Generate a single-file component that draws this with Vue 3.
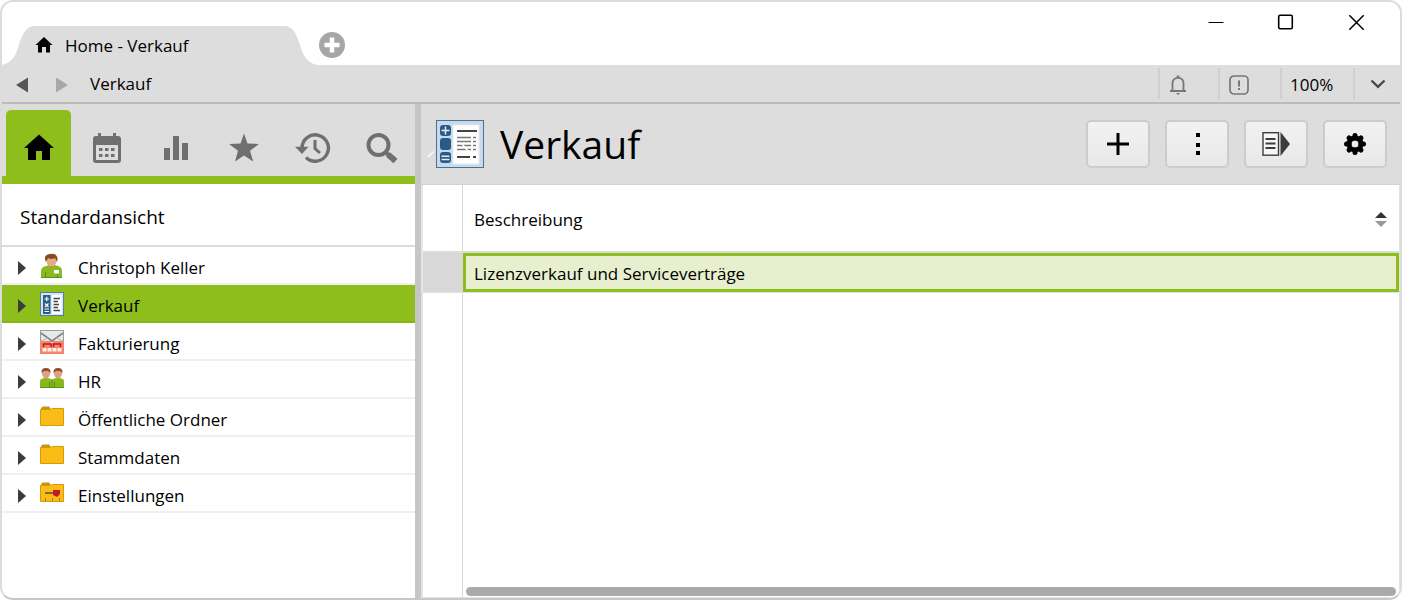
<script setup>
import { ref } from 'vue'

const sections = [
  { id: 'home', label: 'Home' },
  { id: 'calendar', label: 'Kalender' },
  { id: 'chart', label: 'Auswertungen' },
  { id: 'star', label: 'Favoriten' },
  { id: 'history', label: 'Verlauf' },
  { id: 'search', label: 'Suche' }
]
const section = ref('home')

const tree = [
  { label: 'Christoph Keller', icon: 'person' },
  { label: 'Verkauf', icon: 'sales' },
  { label: 'Fakturierung', icon: 'invoice' },
  { label: 'HR', icon: 'people' },
  { label: 'Öffentliche Ordner', icon: 'folder' },
  { label: 'Stammdaten', icon: 'folder' },
  { label: 'Einstellungen', icon: 'settings' }
]
const selected = ref('Verkauf')

const rows = ['Lizenzverkauf und Serviceverträge']
</script>

<template>
  <div class="window">
    <header class="titlebar">
      <div class="tabs">
        <svg class="cap" width="33" height="39" viewBox="0 0 33 39" aria-hidden="true"><path d="M0 39C9 37 13 31 16 22C20 10 23 0 33 0V39Z" fill="#ddd" /></svg>
        <button class="tab" type="button">
          <svg width="18" height="18" viewBox="0 0 18 18" aria-hidden="true"><path d="M9 0L0.5 8H3V15.500H7V10H11V15.500H15V8H17.500Z" fill="#000" /></svg>
          <span>Home - Verkauf</span>
        </button>
        <svg class="cap" width="33" height="39" viewBox="0 0 33 39" aria-hidden="true"><path d="M33 39C24 37 20 31 17 22C13 10 10 0 0 0V39Z" fill="#ddd" /></svg>
        <button class="add" type="button" aria-label="Neuer Tab">
          <svg width="26" height="26" viewBox="0 0 26 26"><circle cx="13" cy="13" r="13" fill="#a6a6a6" /><path d="M13 5.500V20.500M5.500 13H20.500" stroke="#fff" stroke-width="4.500" /></svg>
        </button>
      </div>
      <div class="controls">
        <button type="button" aria-label="Minimieren"><svg width="16" height="16" viewBox="0 0 16 16"><path d="M0.500 8.500H15.500" stroke="#000" stroke-width="1.200" /></svg></button>
        <button type="button" aria-label="Maximieren"><svg width="16" height="16" viewBox="0 0 16 16"><rect x="0.700" y="1.200" width="13.600" height="13.600" rx="1.500" fill="none" stroke="#000" stroke-width="1.600" /></svg></button>
        <button type="button" aria-label="Schliessen"><svg width="16" height="16" viewBox="0 0 16 16"><path d="M1.300 1.300L15.700 15.700M15.700 1.300L1.300 15.700" stroke="#000" stroke-width="1.500" /></svg></button>
      </div>
    </header>

    <nav class="toolbar" aria-label="Navigation">
      <button class="arrow" type="button" aria-label="Zurück"><svg width="12" height="16" viewBox="0 0 12 16"><path d="M12 0.500V15.500L0 8Z" fill="#555" /></svg></button>
      <button class="arrow" type="button" aria-label="Vorwärts"><svg width="12" height="16" viewBox="0 0 12 16"><path d="M0 0.500V15.500L12 8Z" fill="#a8a8a8" /></svg></button>
      <a class="crumb" href="#">Verkauf</a>
      <div class="status">
        <button class="cell bell" type="button" aria-label="Benachrichtigungen">
          <svg width="18" height="20" viewBox="0 0 18 20"><path d="M1 16H17M3.500 16V8.500C3.500 5 5.500 2.800 9 2.800S14.500 5 14.500 8.500V16" fill="none" stroke="#777" stroke-width="1.800" /><circle cx="9" cy="1.800" r="1.500" fill="#777" /><path d="M7 18H11L9 20Z" fill="#777" /></svg>
        </button>
        <button class="cell alert" type="button" aria-label="Hinweise">
          <svg width="20" height="20" viewBox="0 0 20 20"><rect x="1" y="1" width="18" height="18" rx="4" fill="none" stroke="#777" stroke-width="1.700" /><path d="M10 5.500V11.500M10 13V15" stroke="#777" stroke-width="2" /></svg>
        </button>
        <button class="cell zoom" type="button">100%</button>
        <button class="cell more" type="button" aria-label="Mehr">
          <svg width="16" height="10" viewBox="0 0 16 10"><path d="M1.500 0.500L8 6.800L14.500 0.500" fill="none" stroke="#484848" stroke-width="2.300" /></svg>
        </button>
      </div>
    </nav>

    <div class="body">
      <aside class="sidebar">
        <div class="sections">
          <button v-for="s in sections" :key="s.id" type="button" class="section" :class="{ active: s.id === section }" :aria-label="s.label" @click="section = s.id">
            <svg width="32" height="32" viewBox="0 0 32 32">
              <path v-if="s.id === 'home'" d="M16 2.500L1 16H5V28H13V19H19V28H27V16H31Z" fill="#000" />
              <g v-else-if="s.id === 'calendar'" fill="#6f6f6f">
                <path fill-rule="evenodd" d="M5 4H7V1H10V4H22V1H25V4H27Q30 4 30 7V28Q30 31 27 31H5Q2 31 2 28V7Q2 4 5 4ZM5 13V28H27V13Z" />
                <path d="M8 16h3.500v3h-3.500zM14 16h3.500v3h-3.500zM20 16h3.500v3h-3.500zM8 22h3.500v3h-3.500zM14 22h3.500v3h-3.500zM20 22h3.500v3h-3.500z" />
              </g>
              <path v-else-if="s.id === 'chart'" d="M4 16H10V28H4ZM13 4H19V28H13ZM22 11H28V28H22Z" fill="#6f6f6f" />
              <path v-else-if="s.id === 'star'" d="M16 1.500L19.500 11.500L31 12L22 18.700L25.200 29.500L16 23.500L7 29.500L10 18.700L1 12L12.500 11.500Z" fill="#6f6f6f" />
              <g v-else-if="s.id === 'history'">
                <path d="M6 16A13.200 13.200 0 1 1 10 25.500" fill="none" stroke="#6f6f6f" stroke-width="3.400" />
                <path d="M-1 14.700H12.500L6 22Z" fill="#6f6f6f" />
                <path d="M19 8V16.500L24 21" fill="none" stroke="#6f6f6f" stroke-width="3" />
              </g>
              <g v-else fill="none" stroke="#6f6f6f">
                <circle cx="13.500" cy="13" r="10" stroke-width="4" />
                <path d="M20.500 20L23.500 23" stroke-width="4" />
                <path d="M23 22.500L30.500 29" stroke-width="6" />
              </g>
            </svg>
          </button>
        </div>
        <h2>Standardansicht</h2>
        <ul class="tree">
          <li v-for="item in tree" :key="item.label">
            <button type="button" class="node" :class="{ selected: item.label === selected }" @click="selected = item.label">
              <svg class="expander" width="8" height="14" viewBox="0 0 8 14" aria-hidden="true"><path d="M0 0L8 7L0 14Z" fill="#3c3c3c" /></svg>
              <svg class="icon" width="24" height="24" viewBox="0 0 24 24" aria-hidden="true">
                <g v-if="item.icon === 'person'">
                  <path d="M1 24V17Q1 13 6 12L9 11H15L18 12Q22 13 22 17V24Z" fill="#8aba1f" />
                  <path d="M1 23.500H22M5.500 18V24M17.500 20V24" stroke="#5c9014" stroke-width="1" />
                  <path d="M8 10L11.500 14L15 10Z" fill="#bd7858" />
                  <ellipse cx="11.500" cy="7" rx="5" ry="5.500" fill="#e2ac8d" />
                  <path d="M6 8C3 2 7 0 11 0C15 -1 19 2 17 8L15 4Q11 6 8 4Z" fill="#8a4a20" />
                  <rect x="14" y="16" width="5" height="3.500" fill="#fff" />
                </g>
                <g v-else-if="item.icon === 'sales'">
                  <rect x="0.500" y="0.500" width="23" height="23" fill="#d7e5f0" stroke="#557f9e" />
                  <rect x="3" y="3" width="7.500" height="19" fill="#285f8d" />
                  <rect x="12" y="3" width="9.500" height="19" fill="#fff" />
                  <path d="M4.500 7H9M6.750 4.800V9.200M5 11.500L8.500 15M8.500 11.500L5 15M4.500 17H9M4.500 19.500H9" stroke="#fff" stroke-width="1.200" />
                  <path d="M13.500 6.500H20M13.500 9.500H18M13.500 12.500H19M13.500 15.500H18M13.500 18.500H20" stroke="#444" stroke-width="1.400" />
                </g>
                <g v-else-if="item.icon === 'invoice'">
                  <rect x="0.500" y="0.500" width="23" height="11" fill="#e6eae9" stroke="#969e9e" />
                  <path d="M1 3L12 11L23 3" fill="none" stroke="#808888" stroke-width="1.800" />
                  <path d="M1 11L8 8M23 11L16 8" fill="none" stroke="#b4baba" />
                  <path d="M0 11H9L12 13L15 11H24V24H0Z" fill="#f78464" />
                  <path d="M3.500 17V14H11V17M13.500 17V14H20.500V17" fill="none" stroke="#c8102e" stroke-width="1.500" />
                  <path d="M2.500 18h4v3.500h-4zM7.500 18h4v3.500h-4zM12.500 18h4v3.500h-4zM17.500 18h4v3.500h-4z" fill="#fff3ec" />
                </g>
                <g v-else-if="item.icon === 'people'">
                  <path d="M0 20V13Q0 10 6 10Q12 10 12 13Q12 10 18 10Q24 10 24 13V20Z" fill="#88b91b" />
                  <path d="M0.500 19.500H23.500M12 11V20M9.500 14V20M14.500 14V20" stroke="#5a9018" />
                  <ellipse cx="6" cy="5.500" rx="4" ry="4.800" fill="#dfa080" /><ellipse cx="18" cy="5.500" rx="4" ry="4.800" fill="#dfa080" />
                  <path d="M1.500 5Q1 0 6 0Q11 0 10.500 5L8 3H4ZM13.500 5Q13 0 18 0Q23 0 22.500 5L20 3H16Z" fill="#91502b" />
                </g>
                <g v-else>
                  <path d="M1 5V2L3 0.500H9L11 3V5Z" fill="#c8930e" />
                  <path d="M0.500 3.500H11L12 2.500H23.500V19.500H0.500Z" fill="#fcbc16" stroke="#d79a0e" />
                  <g v-if="item.icon === 'settings'">
                    <path d="M5 11H15" stroke="#806830" stroke-width="2" />
                    <path d="M13 8H20V12L17 15L13 13Z" fill="#c51623" />
                    <path d="M5.500 16V19M12.500 16V19M19.500 16V19" stroke="#a77717" />
                  </g>
                </g>
              </svg>
              <span>{{ item.label }}</span>
            </button>
          </li>
        </ul>
      </aside>

      <main class="content">
        <div class="head">
          <svg class="emblem" width="56" height="48" viewBox="0 0 56 48" aria-hidden="true">
            <path d="M0 37L5.500 31.500" stroke="#fff" stroke-width="1.300" />
            <rect x="8.500" y="0.500" width="47" height="47" fill="#c9d9e8" stroke="#487198" />
            <rect x="25" y="5" width="26" height="39" fill="#fff" stroke="#e4edf5" />
            <g fill="#285b88"><rect x="12" y="5" width="11" height="11" rx="3" /><rect x="12" y="18" width="11" height="12" rx="3" /><rect x="12" y="32" width="11" height="11" rx="3" /></g>
            <path d="M13.500 10.500H21.500M17.500 6.500V14.500M13.500 36.300H21.500M13.500 39.500H21.500" stroke="#e4edf5" stroke-width="1.500" />
            <path d="M29 11H49M29 37H42M45 37H48" stroke="#444" stroke-width="2" />
            <path d="M29 17.500H43M29 21.500H43M29 25.500H43M29 29.500H43M45 17.500H48M45 21.500H48M45 25.500H48M45 29.500H48" stroke="#777" stroke-width="1.500" />
            <path d="M34 24L40 31" stroke="#fff" stroke-width="1.500" />
          </svg>
          <h1>Verkauf</h1>
          <div class="actions">
            <button type="button" aria-label="Hinzufügen"><svg width="28" height="28" viewBox="0 0 28 28"><path d="M14 3V25M3 14H25" stroke="#000" stroke-width="3" /></svg></button>
            <button type="button" aria-label="Menü"><svg width="28" height="28" viewBox="0 0 28 28"><path d="M13 3h4v4h-4zM13 13h4v4h-4zM13 21h4v4h-4z" fill="#000" /></svg></button>
            <button type="button" aria-label="Ausgabe"><svg width="28" height="28" viewBox="0 0 28 28"><rect x="1" y="2.700" width="15.500" height="22.500" fill="#f6f6f6" stroke="#3c3c3c" stroke-width="1.400" /><path d="M3.500 9H13.500M3.500 13.500H13.500M3.500 18H13.500" stroke="#3c3c3c" stroke-width="2" /><path d="M18.500 2V26L28 14Z" fill="#3c3c3c" /></svg></button>
            <button type="button" aria-label="Einstellungen"><svg width="28" height="28" viewBox="0 0 28 28"><g stroke="#000" stroke-width="5" stroke-linecap="round"><path d="M14 5.500V8M14 20V22.500M5.500 14H8M20 14H22.500M8 8L9 9M19 19L20 20M20 8L19 9M8 20L9 19" /></g><circle cx="14" cy="14" r="6" fill="none" stroke="#000" stroke-width="5" /></svg></button>
          </div>
        </div>
        <table>
          <thead>
            <tr>
              <th class="gutter" scope="col" aria-label="Zeile"></th>
              <th scope="col"><button type="button" class="sort"><span>Beschreibung</span><svg width="12" height="16" viewBox="0 0 12 16" aria-hidden="true"><path d="M6 0L12 6H0Z" fill="#333" /><path d="M0 9H12L6 15Z" fill="#999" /></svg></button></th>
            </tr>
          </thead>
          <tbody>
            <tr v-for="row in rows" :key="row">
              <td class="gutter mark"></td>
              <td class="value">{{ row }}</td>
            </tr>
          </tbody>
        </table>
        <div class="rest">
          <div class="rest-gutter"></div>
          <div class="track"><div class="thumb"></div></div>
        </div>
      </main>
    </div>
  </div>
</template>

<style>
body { margin: 0; background: #fff; }
</style>

<style scoped>
* { box-sizing: border-box; }
.window {
  min-height: 100vh;
  display: flex;
  flex-direction: column;
  overflow: hidden;
  border: 2px solid #dcdcdc;
  border-bottom-color: #c8c8c8;
  border-radius: 13px;
  background: #fff;
  color: #000;
  font: 17px/24px "Open Sans", "Noto Sans", sans-serif;
}
button { margin: 0; padding: 0; border: 0; background: none; color: inherit; font: inherit; text-align: left; }
svg { display: block; flex: none; overflow: visible; }

.titlebar { height: 63px; display: flex; justify-content: space-between; }
.tabs { display: flex; align-items: flex-end; }
.tab { width: 249px; height: 39px; display: flex; align-items: center; gap: 12px; background: #ddd; }
.add { margin: 0 0 7px 2px; }
.controls { display: flex; gap: 54px; padding: 12px 36px 0 0; align-items: flex-start; }

.toolbar { height: 39px; display: flex; align-items: center; background: #ddd; border-bottom: 2px solid #bbb; padding-left: 14px; }
.arrow { margin-right: 28px; padding-top: 3px; }
.crumb { color: inherit; text-decoration: none; margin-left: -6px; }
.status { margin-left: auto; display: flex; align-self: stretch; padding: 3px 0; }
.cell { display: flex; align-items: center; border-left: 2px solid #d0d0d0; padding-top: 2px; }
.bell { width: 60px; padding-left: 9px; }
.alert { width: 62px; padding-left: 9px; }
.zoom { width: 73px; padding-left: 8px; }
.more { width: 47px; padding-left: 15px; }

.body { flex: 1; display: flex; }
.sidebar { width: 419px; border-right: 6px solid #c6c6c6; }
.sections { height: 80px; display: flex; padding: 6px 0 0 4px; background: #ddd; border-bottom: 8px solid #8ebe1c; }
.section { flex: 1; display: flex; justify-content: center; padding-top: 22px; }
.section.active { flex: 0 0 65px; margin-right: 2px; border-radius: 5px 5px 0 0; background: #8ebe1c; }
h2 { margin: 0; height: 63px; padding: 19px 18px 0; border-bottom: 2px solid #dcdcdc; font-size: 19px; line-height: 28px; font-weight: 400; }
.tree { list-style: none; margin: 0; padding: 0; }
.node { width: 100%; height: 38px; display: flex; align-items: center; padding: 6px 0 0 16px; border-bottom: 2px solid #efefef; }
.node.selected { background: #8ebe1c; border-color: #84b416; }
.icon { margin: 0 14px 4px; }

.content { flex: 1; min-width: 0; display: flex; flex-direction: column; }
.head { height: 81px; display: flex; align-items: center; padding: 0 13px 0 7px; background: #ddd; border-bottom: 1px solid #d2d2d2; }
h1 { margin: 0 0 0 16px; font-size: 39px; line-height: 48px; font-weight: 400; }
.actions { display: flex; gap: 15px; margin-left: auto; }
.actions button { width: 64px; height: 48px; display: flex; align-items: center; justify-content: center; border: 2px solid #ccc; border-radius: 5px; background: linear-gradient(#f2f2f2, #e8e8e8); }

table { width: 100%; border-collapse: separate; border-spacing: 0; border-left: 2px solid #e6e6e6; border-right: 1px solid #e2e2e2; }
th, td { padding: 0; font-weight: 400; text-align: left; }
th { height: 68px; padding-top: 3px; border-bottom: 2px solid #dcdcdc; }
.gutter { width: 40px; border-right: 1px solid #d8d8d8; }
.mark { background: #d8d8d8; }
.sort { width: 100%; display: flex; justify-content: space-between; align-items: center; padding: 0 12px 0 11px; }
.value { height: 39px; padding: 2px 8px 0; border: 3px solid #8ebe1c; background: #e8efcf; }
.rest { flex: 1; display: flex; border: solid #e2e2e2; border-width: 1px 1px 1px 2px; }
.rest-gutter { width: 40px; border-right: 1px solid #d8d8d8; }
.track { flex: 1; display: flex; align-items: flex-end; padding: 0 3px 1px; }
.thumb { flex: 1; height: 9px; border-radius: 5px; background: #aaa; }
</style>
